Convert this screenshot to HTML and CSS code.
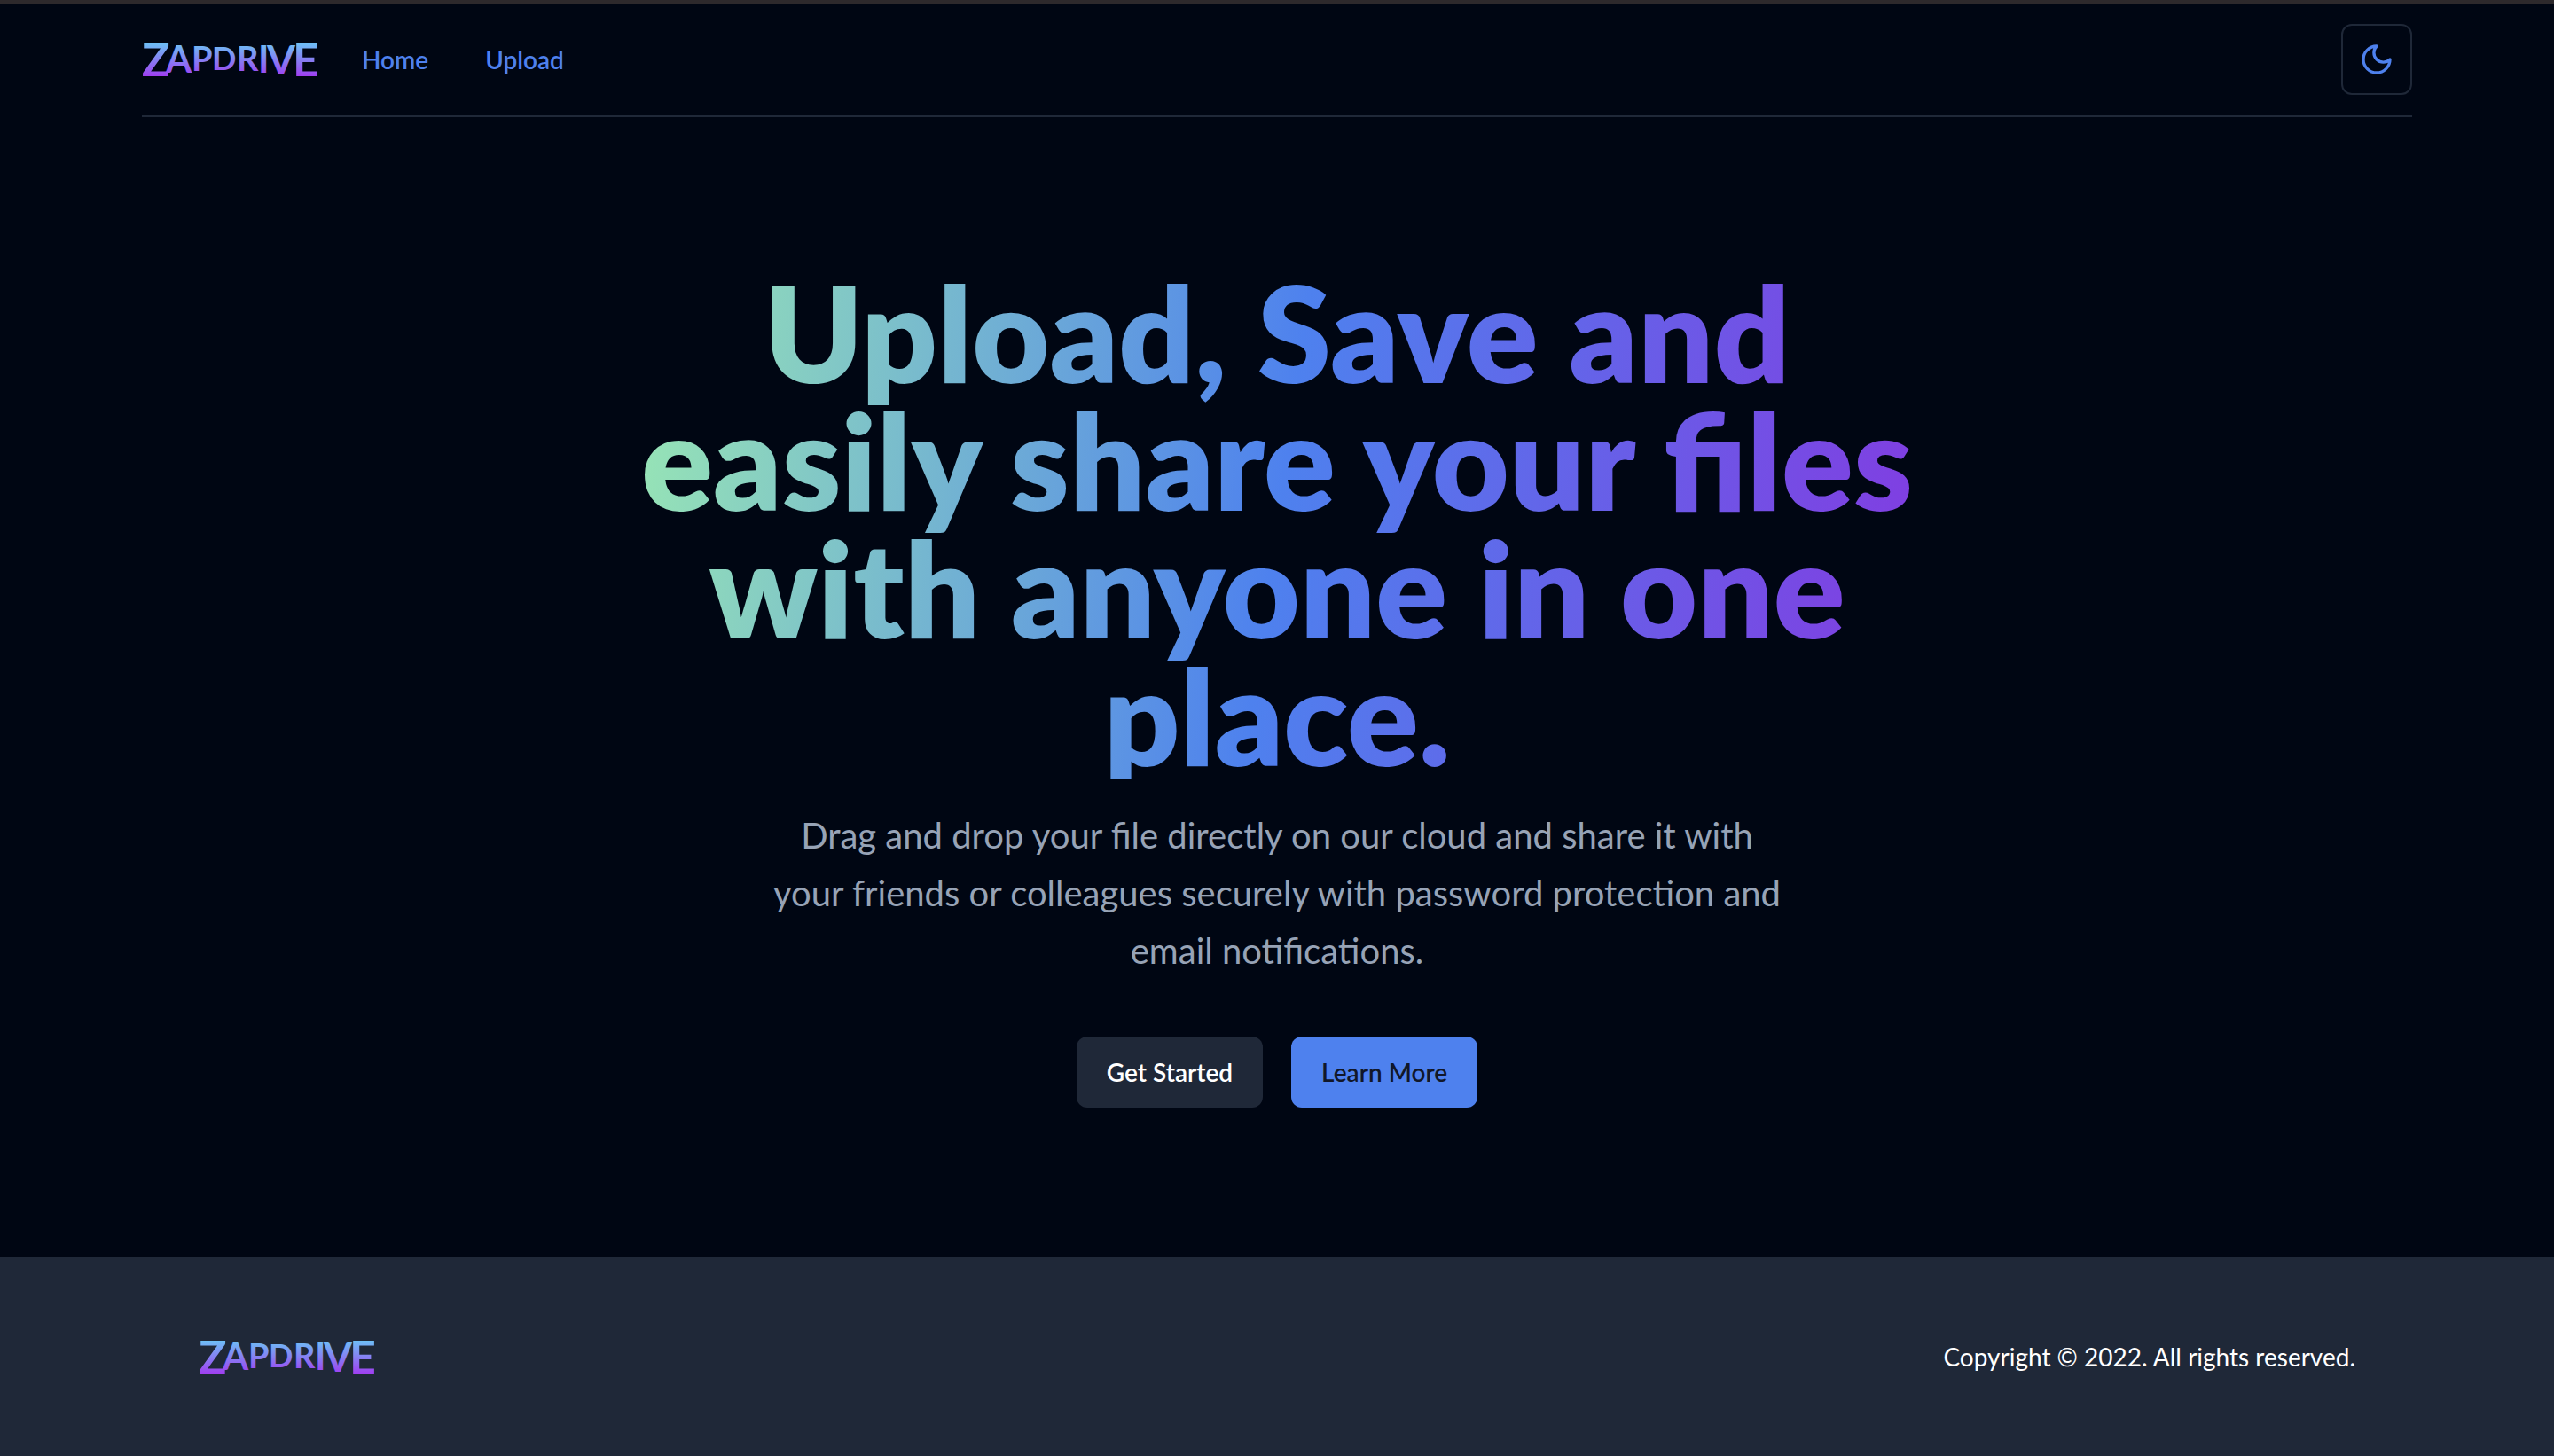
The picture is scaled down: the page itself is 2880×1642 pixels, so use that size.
FILE: index.html
```html
<!DOCTYPE html>
<html lang="en">
<head>
<meta charset="utf-8">
<meta name="viewport" content="width=device-width, initial-scale=1">
<title>Zapdrive</title>
<link rel="stylesheet" href="styles.css">
</head>
<body>
<svg class="defs" width="0" height="0" aria-hidden="true">
  <defs>
    <linearGradient id="brand" gradientUnits="userSpaceOnUse" x1="0" y1="2" x2="0" y2="46">
      <stop offset="0" stop-color="#68cdf6"/>
      <stop offset="1" stop-color="#a335f0"/>
    </linearGradient>
    <symbol id="wordmark" viewBox="0 0 200 48">
      <text class="wordmark" fill="url(#brand)"><tspan class="s5" x="0" y="43">Z</tspan><tspan class="s3" x="27" y="39">A</tspan><tspan class="s2" x="56" y="37">P</tspan><tspan class="s1" x="79" y="36">D</tspan><tspan class="s2" x="107" y="37">R</tspan><tspan class="s3" x="131" y="39">I</tspan><tspan class="s4" x="141" y="41">V</tspan><tspan class="s5" x="170" y="43">E</tspan></text>
    </symbol>
  </defs>
</svg>

<header class="header">
  <div class="header-inner">
    <a class="logo" href="#" aria-label="Zapdrive"><svg class="logo-art" aria-hidden="true"><use href="#wordmark"/></svg></a>
    <nav class="nav">
      <a class="nav-link" href="#">Home</a>
      <a class="nav-link" href="#upload">Upload</a>
    </nav>
    <button class="theme-toggle" type="button" aria-label="Toggle theme">
      <svg class="icon" viewBox="0 0 24 24" fill="none" stroke="currentColor" stroke-width="2" stroke-linecap="round" stroke-linejoin="round" aria-hidden="true"><path d="M12 3a6 6 0 0 0 9 9 9 9 0 1 1-9-9Z"/></svg>
    </button>
  </div>
</header>

<main class="hero">
  <h1 class="title">Upload, Save and<br>easily share your files<br>with anyone in one<br>place.</h1>
  <p class="lead">Drag and drop your file directly on our cloud and share it with your friends or colleagues securely with password protection and email notifications.</p>
  <div class="actions">
    <button class="button button-dark" type="button">Get Started</button>
    <button class="button button-blue" type="button">Learn More</button>
  </div>
</main>

<footer class="footer">
  <a class="logo" href="#" aria-label="Zapdrive"><svg class="logo-art" aria-hidden="true"><use href="#wordmark"/></svg></a>
  <p class="copyright">Copyright © 2022. All rights reserved.</p>
</footer>
</body>
</html>
```
FILE: styles.css
```css
*,
*::before,
*::after {
  box-sizing: border-box;
}

body {
  margin: 0;
  min-height: 100vh;
  display: flex;
  flex-direction: column;
  background: #000613;
  color: #fff;
  font-family: Lato, "Open Sans", sans-serif;
  font-size: 28px;
  line-height: 40px;
}

a {
  color: inherit;
  text-decoration: none;
}

button {
  font: inherit;
  cursor: pointer;
}

.defs {
  position: absolute;
}

/* Header */
.header {
  padding: 0 160px;
  border-top: 4px solid #2d292c;
}

.header-inner {
  display: flex;
  align-items: center;
  height: 128px;
  border-bottom: 2px solid #1f2838;
}

.logo,
.logo-art {
  display: block;
  width: 200px;
  height: 48px;
}

.wordmark {
  font-family: Lato, sans-serif;
  font-weight: 700;
}

.s1 { font-size: 36px; }
.s2 { font-size: 38px; }
.s3 { font-size: 42px; }
.s4 { font-size: 46px; }
.s5 { font-size: 52px; }

.nav {
  display: flex;
  gap: 64px;
  margin-left: 48px;
}

.nav-link {
  color: #4e81ee;
  font-weight: 600;
}

.theme-toggle {
  display: grid;
  place-items: center;
  width: 80px;
  height: 80px;
  margin-left: auto;
  padding: 0;
  border: 2px solid #1f2838;
  border-radius: 12px;
  background: transparent;
  color: #4e81ee;
}

.icon {
  width: 40px;
  height: 40px;
}

/* Hero */
.hero {
  flex: 1;
  display: flex;
  flex-direction: column;
  align-items: center;
  justify-content: center;
  padding: 64px;
  text-align: center;
}

.title {
  width: 100%;
  max-width: 1536px;
  margin: 0;
  background: linear-gradient(98deg, #9eeeb0, #4e81ee, #8636e0);
  background-clip: text;
  -webkit-background-clip: text;
  color: transparent;
  font-size: 150px;
  font-weight: 800;
  line-height: 144px;
}

.lead {
  max-width: 1152px;
  margin: 32px 0 64px;
  color: #97a3b6;
  font-size: 40px;
  line-height: 65px;
}

.actions {
  display: flex;
  gap: 32px;
}

.button {
  height: 80px;
  padding: 0 34px;
  border: 0;
  border-radius: 12px;
  font-weight: 600;
}

.button-dark {
  background: #1f2838;
  color: #fff;
}

.button-blue {
  background: #4e81ee;
  color: #111729;
}

/* Footer */
.footer {
  display: flex;
  align-items: center;
  justify-content: space-between;
  height: 224px;
  padding: 0 224px;
  background: #1f2838;
}

.copyright {
  margin: 0;
}
```
